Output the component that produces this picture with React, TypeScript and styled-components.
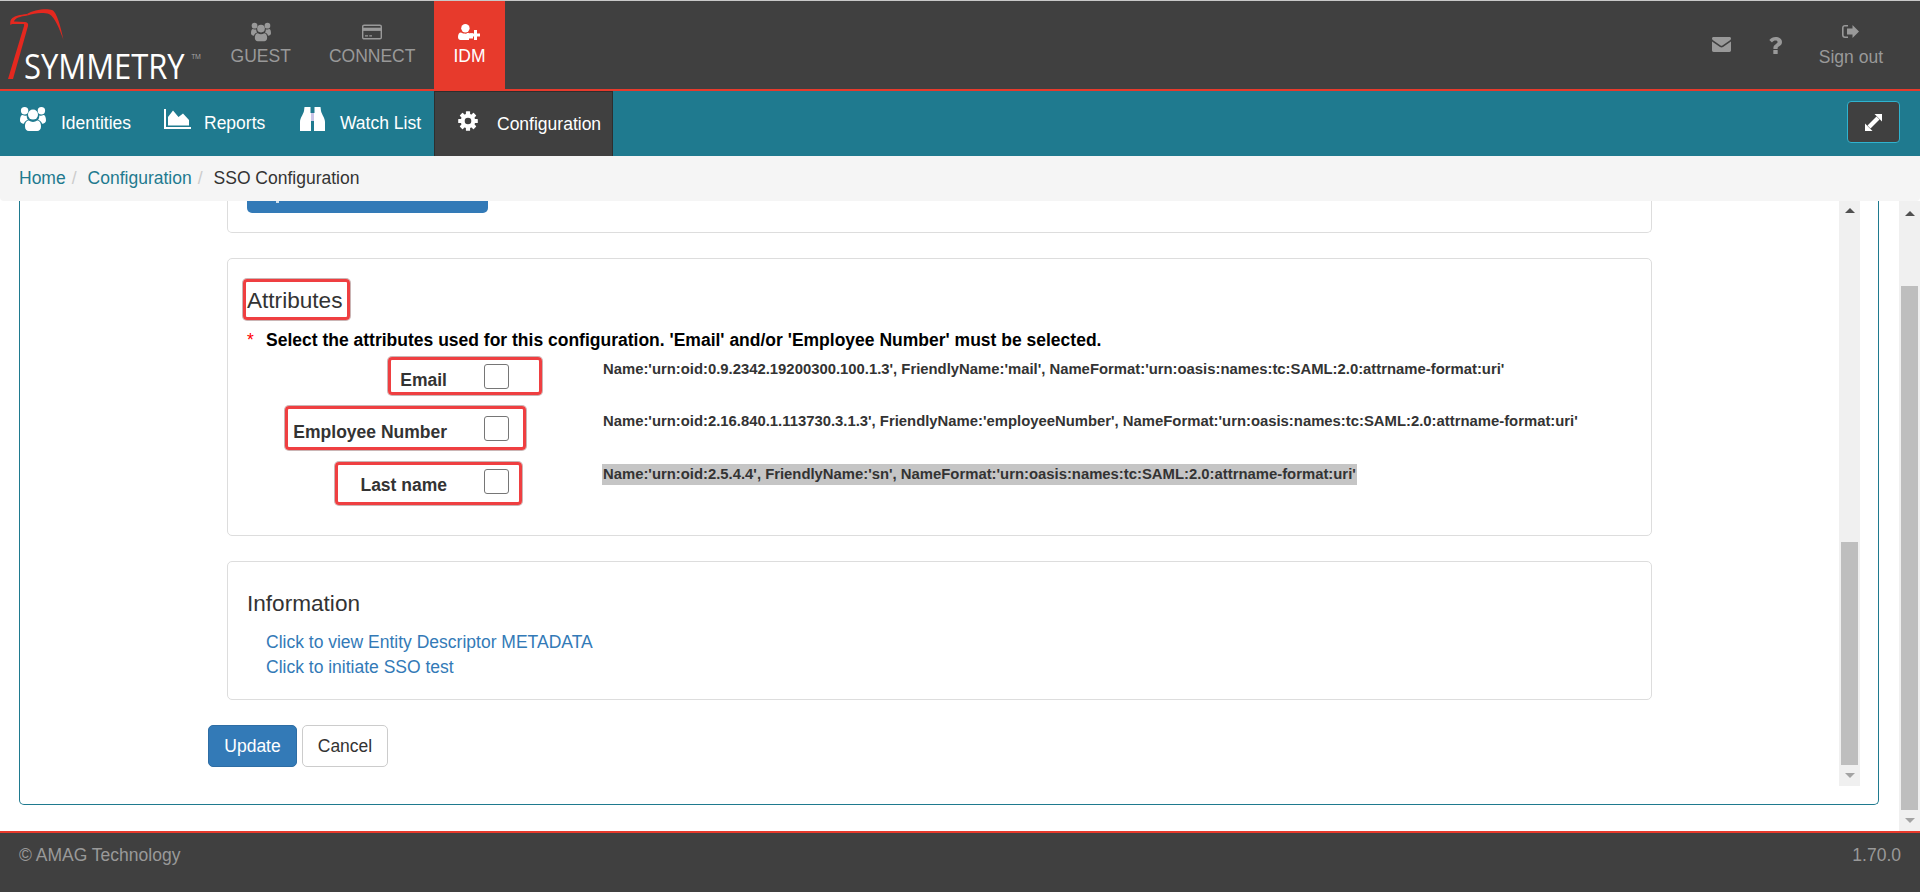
import React from "react";
import styled, { createGlobalStyle } from "styled-components";

const Global = createGlobalStyle`
  html, body { margin: 0; padding: 0; height: 100%; background: #fff; overflow: hidden; }
  body { font-family: "Liberation Sans", Arial, sans-serif; font-size: 17.5px; line-height: 25px; color: #333; }
  * { box-sizing: border-box; }
`;

const Page = styled.div`
  display: flex;
  flex-direction: column;
  height: 892px;
  width: 1920px;
`;

const TopBar = styled.header`
  display: flex;
  height: 91px;
  flex: none;
  background: #404040;
  border-top: 1px solid #c8c8c8;
  border-bottom: 2px solid #e73a2c;
`;

const LogoWrap = styled.div`
  width: 211.6px;
  flex: none;
  margin-top: -1px;
  svg { display: block; }
`;

const TopItem = styled.a<{ $active?: boolean }>`
  display: flex;
  flex-direction: column;
  align-items: center;
  padding: 0 19px;
  color: ${(p) => (p.$active ? "#fff" : "#999")};
  background: ${(p) => (p.$active ? "#e73a2c" : "transparent")};
  height: 88px;
  svg { display: block; margin-top: 19px; height: 24px; }
  span { display: block; line-height: 25px; }
`;

const TopSpacer = styled.div`
  flex: 1;
`;

const IconOnly = styled.a`
  color: #999;
  display: flex;
  align-items: flex-start;
  justify-content: center;
  width: 54px;
  padding-top: 36px;
  svg { display: block; }
`;

const SignOutWrap = styled.div`
  margin-left: 16px;
  margin-right: 37px;
  color: #999;
  display: flex;
  flex-direction: column;
  align-items: center;
  svg { display: block; margin-top: 24px; }
  span { display: block; margin-top: 7px; }
`;

const SubBar = styled.nav`
  display: flex;
  align-items: stretch;
  height: 65px;
  flex: none;
  background: #1f7a8f;
  color: #fff;
`;

const SubItem = styled.a<{ $w: number; $gap: number }>`
  display: flex;
  align-items: center;
  width: ${(p) => p.$w}px;
  padding-left: 20px;
  gap: ${(p) => p.$gap}px;
  span { display: block; margin-top: -1px; }
  svg { display: block; margin-top: -9px; flex: none; }
`;

const ConfigTab = styled.a`
  display: flex;
  align-items: center;
  width: 179px;
  padding-left: 23px;
  gap: 19px;
  background: #404040;
  border: 1px solid #2e2e2e;
  border-bottom: none;
  span { display: block; }
  svg { display: block; margin-top: -6px; flex: none; }
`;

const SubSpacer = styled.div`
  flex: 1;
`;

const ExpandButton = styled.button`
  align-self: flex-start;
  margin: 10px 20px 0 0;
  width: 53px;
  height: 42px;
  background: #404040;
  border: 1px solid #2fb3cf;
  border-radius: 4px;
  display: flex;
  align-items: center;
  justify-content: center;
  padding: 0;
  color: #fff;
`;

const Breadcrumb = styled.div`
  display: flex;
  align-items: center;
  height: 45px;
  flex: none;
  background: #f5f5f5;
  padding: 0 0 0 19px;
  border-radius: 0 0 4px 4px;
  position: relative;
  z-index: 1;
`;

const Crumb = styled.a`
  color: #1f7a8f;
`;

const CrumbSep = styled.span`
  color: #ccc;
  padding: 0 11px 0 6px;
`;

const CrumbCurrent = styled.span`
  color: #333;
`;

const Main = styled.main`
  display: flex;
  flex: 1;
  min-height: 0;
`;

const PanelColumn = styled.div`
  flex: 1;
  padding: 0 20px 26px 19px;
  min-width: 0;
`;

const Panel = styled.section`
  display: flex;
  height: 100%;
  border: 1px solid #1f7a8f;
  border-top: none;
  border-radius: 0 0 5px 5px;
  padding-right: 18px;
  padding-bottom: 18px;
`;

const Form = styled.div`
  flex: 1;
  padding-left: 188px;
  min-width: 0;
`;

const Card = styled.div<{ $pt: number; $pb: number }>`
  margin-left: 19px;
  width: 1425px;
  border: 1px solid #ddd;
  border-radius: 5px;
  padding: ${(p) => p.$pt}px 0 ${(p) => p.$pb}px 19px;
  margin-bottom: 25px;
`;

const ClippedCard = styled.div`
  margin-left: 19px;
  width: 1425px;
  height: 32px;
  border: 1px solid #ddd;
  border-top: none;
  border-radius: 0 0 5px 5px;
  padding-left: 19px;
  margin-bottom: 25px;
`;

const ClippedButton = styled.div`
  position: relative;
  width: 241px;
  height: 12px;
  background: #337ab7;
  border-radius: 0 0 5px 5px;
  &::before {
    content: "";
    position: absolute;
    left: 29px;
    top: 0;
    width: 3px;
    height: 2px;
    background: #cfe0ee;
  }
`;

const Annotated = styled.div`
  border: 3px solid #ef3f41;
  border-radius: 4px;
  box-shadow: 0 0 0 1px rgba(140, 90, 90, 0.45);
`;

const HeadingBox = styled(Annotated)`
  width: 107px;
  height: 41px;
  margin-left: -4px;
  padding: 2px 0 0 1px;
  display: flex;
  align-items: center;
`;

const Title = styled.h4`
  margin: 0;
  font-size: 22.6px;
  font-weight: 400;
  line-height: 32px;
  color: #333;
`;

const Required = styled.div`
  display: flex;
  margin-top: 8px;
  margin-bottom: 4px;
  font-weight: 700;
  color: #000;
`;

const Star = styled.span`
  width: 19px;
  flex: none;
  color: #f00;
  font-weight: 400;
`;

const AttrRow = styled.div<{ $mb: number }>`
  display: flex;
  align-items: flex-start;
  margin-bottom: ${(p) => p.$mb}px;
`;

const LabelCell = styled.div<{ $mr: number }>`
  width: 355px;
  flex: none;
  display: flex;
  justify-content: flex-end;
  padding-right: ${(p) => p.$mr}px;
`;

const AttrBox = styled(Annotated)<{ $pt: number; $pl: number; $pr: number; $h: number }>`
  display: flex;
  align-items: flex-start;
  height: ${(p) => p.$h}px;
  padding: ${(p) => p.$pt - 4}px ${(p) => p.$pr}px 0 ${(p) => p.$pl}px;
`;

const AttrLabel = styled.label`
  font-weight: 700;
  color: #333;
  margin-top: 4px;
  margin-right: 37px;
  white-space: nowrap;
`;

const CheckBox = styled.span`
  display: block;
  width: 25px;
  height: 25px;
  flex: none;
  background: #fff;
  border: 1px solid #767676;
  border-radius: 3px;
`;

const AttrDesc = styled.div<{ $mt: number; $selected?: boolean }>`
  margin-top: ${(p) => p.$mt}px;
  font-size: 14.85px;
  font-weight: 700;
  line-height: 21px;
  padding: 0 1px;
  white-space: nowrap;
  color: #333;
  background: ${(p) => (p.$selected ? "#c5c5c5" : "transparent")};
`;

const InfoLinks = styled.div`
  padding-left: 19px;
  margin-top: 10px;
`;

const InfoLink = styled.a`
  display: block;
  color: #337ab7;
`;

const Actions = styled.div`
  display: flex;
  gap: 5px;
`;

const PrimaryButton = styled.button`
  width: 89px;
  height: 42px;
  padding: 0;
  font: inherit;
  color: #fff;
  background: #337ab7;
  border: 1px solid #2e6da4;
  border-radius: 5px;
`;

const DefaultButton = styled.button`
  width: 86px;
  height: 42px;
  padding: 0;
  font: inherit;
  color: #333;
  background: #fff;
  border: 1px solid #ccc;
  border-radius: 5px;
`;

const Track = styled.div<{ $w: number }>`
  width: ${(p) => p.$w}px;
  flex: none;
  background: #f0f0f0;
  display: flex;
  flex-direction: column;
  align-items: center;
`;

const ArrowCell = styled.div<{ $h: number; $down?: boolean }>`
  height: ${(p) => p.$h}px;
  flex: none;
  width: 100%;
  display: flex;
  align-items: center;
  justify-content: center;
  &::before {
    content: "";
    width: 0;
    height: 0;
    border-left: 5px solid transparent;
    border-right: 5px solid transparent;
    ${(p) =>
      p.$down
        ? "border-top: 5px solid #a3a3a3;"
        : "border-bottom: 5px solid #505050;"}
  }
`;

const TrackGap = styled.div`
  flex: 1;
`;

const Thumb = styled.div<{ $h: number }>`
  width: 17px;
  height: ${(p) => p.$h}px;
  flex: none;
  background: #bebebe;
`;

const Footer = styled.footer`
  display: flex;
  align-items: center;
  justify-content: space-between;
  height: 61px;
  flex: none;
  background: #404040;
  border-top: 2px solid #e73a2c;
  color: #999;
  padding: 0 19px 14px;
`;

const Logo = () => (
  <svg width="212" height="90" viewBox="0 0 212 90">
    <path
      d="M27 14 C33 10 46 8 52 10 C57 12 61 28 63.5 40 C59 28 55 17 49 14 C43 12 34 13 27.5 15.5 Z"
      fill="#e5281f"
    />
    <path
      d="M10.5 25 C9.5 19 12 15.5 27 14 L27.5 15.5 C20 16.5 15 18 14 21.5 L25 22 C28 22.5 28.5 24 28 26 L13 79 L8 79 L24 26 C24.5 24.5 24 24 23 24 L13 24 C12 24 11 24.5 10.5 25 Z"
      fill="#e5281f"
    />
    <text
      transform="translate(24 79) scale(0.885 1)"
      fontFamily="'Open Sans', sans-serif"
      fontSize="35"
      fill="#fff"
    >
      SYMMETRY
    </text>
    <text x="191.5" y="59" fontFamily="'Open Sans', sans-serif" fontSize="6.5" fill="#aaa">
      TM
    </text>
  </svg>
);

const UsersIcon = ({ w }: { w: number }) => (
  <svg width={w} height={(w * 24) / 26} viewBox="0 0 26 24" fill="currentColor">
    <circle cx="4.6" cy="3.8" r="3.7" />
    <circle cx="21.4" cy="3.8" r="3.7" />
    <path d="M0 13.5 C0 10 1 8 2.6 8 C4.2 9 5.6 9 6.8 8.4 C6.6 10 7 11.6 8 12.8 C5.6 13.6 4.4 15 3.9 16.8 C1.6 16.6 0 15.6 0 13.5 Z" />
    <path d="M26 13.5 C26 10 25 8 23.4 8 C21.8 9 20.4 9 19.2 8.4 C19.4 10 19 11.6 18 12.8 C20.4 13.6 21.6 15 22.1 16.8 C24.4 16.6 26 15.6 26 13.5 Z" />
    <circle cx="13" cy="7.6" r="5" />
    <path d="M5 19.5 C5 15.8 6.5 13.6 8.8 13.6 C11.3 15.3 14.7 15.3 17.2 13.6 C19.5 13.6 21 15.8 21 19.5 C21 22.4 19.4 24 17.2 24 L8.8 24 C6.6 24 5 22.4 5 19.5 Z" />
  </svg>
);

const CardIcon = () => (
  <svg width="20" height="15" viewBox="0 0 20 15" fill="none" stroke="currentColor">
    <rect x="0.7" y="0.7" width="18.6" height="13.6" rx="1.4" strokeWidth="1.4" />
    <rect x="0.7" y="3.2" width="18.6" height="3.2" fill="currentColor" stroke="none" />
    <path d="M3 11.3 H6 M7.3 11.3 H10" strokeWidth="1.3" />
  </svg>
);

const UserPlusIcon = () => (
  <svg width="22" height="16" viewBox="0 0 22 16" fill="currentColor">
    <circle cx="7.4" cy="4.2" r="4.2" />
    <path d="M0 13 C0 10.5 1 8.5 3 8.5 C5.5 10 9.5 10 11 8.8 L11 9.3 H15 V14.5 H11 V16 H2.5 C1 16 0 14.8 0 13 Z" />
    <path d="M16 6 H19 V9.5 H22 V12.5 H19 V16 H16 V12.5 H12 V9.5 H16 Z" />
  </svg>
);

const ChartIcon = () => (
  <svg width="27" height="20" viewBox="0 0 27 20" fill="currentColor">
    <path d="M0 0 H2 V18 H27 V20 H0 Z" />
    <path d="M4 16.5 V8 L9 1.5 L14.5 8 L19 4.5 L25 11 V16.5 Z" />
  </svg>
);

const BinocularsIcon = () => (
  <svg width="25" height="24" viewBox="0 0 25 24" fill="currentColor">
    <path d="M4.5 0 H10.5 V6 H11 V24 H0 V15 C0 11 3 8 4 4 Z" />
    <path d="M20.5 0 H14.5 V6 H14 V24 H25 V15 C25 11 22 8 21 4 Z" />
    <rect x="11" y="6" width="3" height="8" fill="#c9c4e6" />
  </svg>
);

const GearIcon = () => (
  <svg width="20" height="20" viewBox="0 0 20 20" fill="currentColor">
    {[0, 45, 90, 135, 180, 225, 270, 315].map((a) => (
      <rect key={a} x="7.9" y="0.2" width="4.2" height="5" rx="0.6" transform={`rotate(${a} 10 10)`} />
    ))}
    <circle cx="10" cy="10" r="5.3" fill="none" stroke="currentColor" strokeWidth="4" />
  </svg>
);

const MailIcon = () => (
  <svg width="19" height="15" viewBox="0 0 19 15" fill="currentColor">
    <path d="M1.5 0 H17.5 C18.4 0 19 .7 19 1.6 C19 2.2 18.6 2.9 18 3.3 L10.4 8.4 C9.8 8.8 9.2 8.8 8.6 8.4 L1 3.3 C.4 2.9 0 2.2 0 1.6 C0 .7 .6 0 1.5 0 Z" />
    <path d="M0 4.6 L8 10 C8.9 10.6 10.1 10.6 11 10 L19 4.6 V13.3 C19 14.3 18.3 15 17.4 15 H1.6 C.7 15 0 14.3 0 13.3 Z" />
  </svg>
);

const QuestionIcon = () => (
  <svg width="13" height="17" viewBox="0 0 13 17" fill="currentColor">
    <path d="M6.6 0 C10.2 0 13 2 13 5 C13 7.3 11.7 8.4 10.2 9.3 C9 10 8.6 10.4 8.6 11.4 V12 H4.4 V10.9 C4.4 9 5.3 8 6.7 7.2 C8 6.4 8.6 6 8.6 5.1 C8.6 4.2 7.8 3.6 6.6 3.6 C5.3 3.6 4.2 4.2 3 5.5 L0.3 3.1 C2 1.1 4 0 6.6 0 Z" />
    <rect x="4.3" y="13" width="4.4" height="4" rx="0.6" />
  </svg>
);

const SignOutIcon = () => (
  <svg width="17" height="13" viewBox="0 0 17 13" fill="currentColor">
    <path d="M6 0 V1.6 H3 C2.1 1.6 1.6 2.1 1.6 3 V10 C1.6 10.9 2.1 11.4 3 11.4 H6 V13 H3 C1.3 13 0 11.7 0 10 V3 C0 1.3 1.3 0 3 0 Z" />
    <path d="M10.5 0 L17 6.5 L10.5 13 V9.5 H5 V3.5 H10.5 Z" />
  </svg>
);

const ExpandIcon = () => (
  <svg width="17" height="17" viewBox="0 0 17 17" fill="currentColor">
    <path d="M9.5 0 H17 V7.5 Z" />
    <path d="M0 9.5 V17 H7.5 Z" />
    <path d="M13 4 L4 13" stroke="currentColor" strokeWidth="4.2" />
  </svg>
);

const attrs = [
  {
    label: "Email",
    desc: "Name:'urn:oid:0.9.2342.19200300.100.1.3', FriendlyName:'mail', NameFormat:'urn:oasis:names:tc:SAML:2.0:attrname-format:uri'",
    mr: 60, pt: 8, pl: 9, pr: 30, h: 38, mb: 11,
  },
  {
    label: "Employee Number",
    desc: "Name:'urn:oid:2.16.840.1.113730.3.1.3', FriendlyName:'employeeNumber', NameFormat:'urn:oasis:names:tc:SAML:2.0:attrname-format:uri'",
    mr: 76, pt: 11, pl: 5, pr: 14, h: 44, mb: 12,
  },
  {
    label: "Last name",
    desc: "Name:'urn:oid:2.5.4.4', FriendlyName:'sn', NameFormat:'urn:oasis:names:tc:SAML:2.0:attrname-format:uri'",
    mr: 80, pt: 8, pl: 22, pr: 10, h: 43, mb: 0,
    selected: true,
  },
];

export default function App() {
  return (
    <Page>
      <Global />
      <TopBar>
        <LogoWrap>
          <Logo />
        </LogoWrap>
        <TopItem>
          <UsersIcon w={20} />
          <span>GUEST</span>
        </TopItem>
        <TopItem>
          <CardIcon />
          <span>CONNECT</span>
        </TopItem>
        <TopItem $active>
          <UserPlusIcon />
          <span>IDM</span>
        </TopItem>
        <TopSpacer />
        <IconOnly>
          <MailIcon />
        </IconOnly>
        <IconOnly>
          <QuestionIcon />
        </IconOnly>
        <SignOutWrap>
          <SignOutIcon />
          <span>Sign out</span>
        </SignOutWrap>
      </TopBar>

      <SubBar>
        <SubItem $w={144} $gap={15}>
          <UsersIcon w={26} />
          <span>Identities</span>
        </SubItem>
        <SubItem $w={136} $gap={13}>
          <ChartIcon />
          <span>Reports</span>
        </SubItem>
        <SubItem $w={154} $gap={15}>
          <BinocularsIcon />
          <span>Watch List</span>
        </SubItem>
        <ConfigTab>
          <GearIcon />
          <span>Configuration</span>
        </ConfigTab>
        <SubSpacer />
        <ExpandButton>
          <ExpandIcon />
        </ExpandButton>
      </SubBar>

      <Breadcrumb>
        <Crumb>Home</Crumb>
        <CrumbSep>/</CrumbSep>
        <Crumb>Configuration</Crumb>
        <CrumbSep>/</CrumbSep>
        <CrumbCurrent>SSO Configuration</CrumbCurrent>
      </Breadcrumb>

      <Main>
        <PanelColumn>
          <Panel>
            <Form>
              <ClippedCard>
                <ClippedButton />
              </ClippedCard>

              <Card $pt={20} $pb={30}>
                <HeadingBox>
                  <Title>Attributes</Title>
                </HeadingBox>
                <Required>
                  <Star>*</Star>
                  Select the attributes used for this configuration. 'Email' and/or 'Employee Number' must be selected.
                </Required>
                {attrs.map((a) => (
                  <AttrRow key={a.label} $mb={a.mb}>
                    <LabelCell $mr={a.mr}>
                      <AttrBox $pt={a.pt} $pl={a.pl} $pr={a.pr} $h={a.h}>
                        <AttrLabel>{a.label}</AttrLabel>
                        <CheckBox />
                      </AttrBox>
                    </LabelCell>
                    <AttrDesc $mt={a.pt - 6} $selected={a.selected}>
                      {a.desc}
                    </AttrDesc>
                  </AttrRow>
                ))}
              </Card>

              <Card $pt={26} $pb={19}>
                <Title>Information</Title>
                <InfoLinks>
                  <InfoLink>Click to view Entity Descriptor METADATA</InfoLink>
                  <InfoLink>Click to initiate SSO test</InfoLink>
                </InfoLinks>
              </Card>

              <Actions>
                <PrimaryButton>Update</PrimaryButton>
                <DefaultButton>Cancel</DefaultButton>
              </Actions>
            </Form>
            <Track $w={21}>
              <ArrowCell $h={18} />
              <TrackGap />
              <Thumb $h={223} />
              <ArrowCell $h={21} $down />
            </Track>
          </Panel>
        </PanelColumn>
        <Track $w={21}>
          <ArrowCell $h={24} />
          <TrackGap />
          <Thumb $h={524} />
          <ArrowCell $h={21} $down />
        </Track>
      </Main>

      <Footer>
        <span>© AMAG Technology</span>
        <span>1.70.0</span>
      </Footer>
    </Page>
  );
}
